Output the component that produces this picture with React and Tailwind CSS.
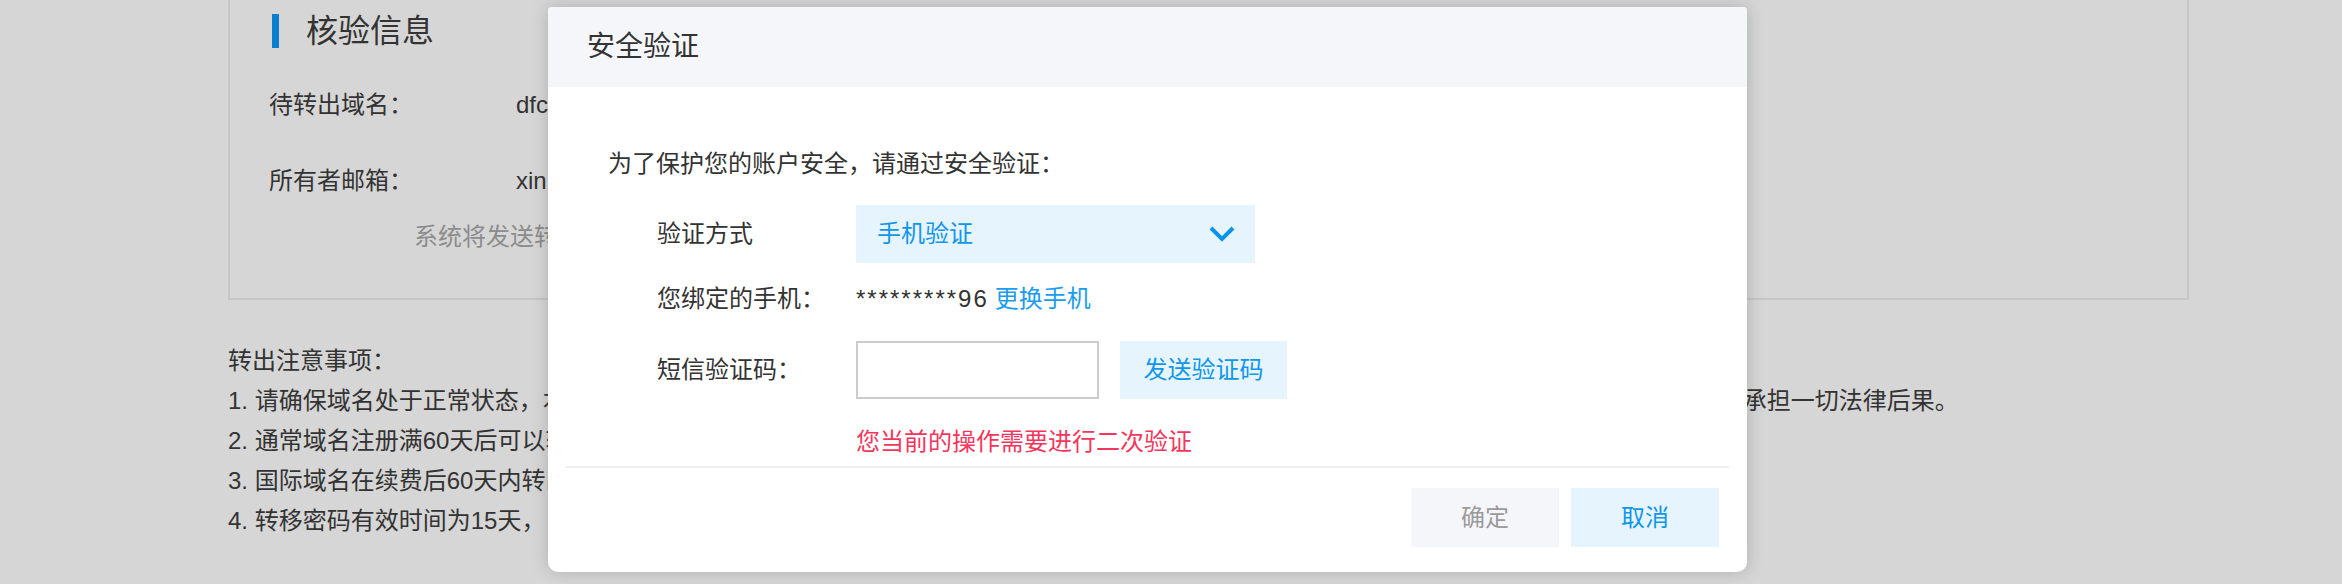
import React from 'react';

const FONT = "font-['Helvetica_Neue','Liberation_Sans','Noto_Sans_CJK_SC',sans-serif]";

const Chevron = () => (
  <svg width="26" height="16" viewBox="0 0 26 16" fill="none">
    <polyline points="2,2 13,13 24,2" stroke="#0b94e8" strokeWidth="4" strokeLinejoin="miter" />
  </svg>
);

const App = () => {
  return (
    <div className={`relative w-[2342px] h-[584px] overflow-hidden bg-[#d6d6d6] text-[#333] ${FONT}`}>
      {/* page under the mask */}
      <div className="pl-[228px] w-[2189px]">
        <section className="h-[300px] border-x-2 border-b-2 border-[#c6c6c6] pl-[42px] pt-[14px]">
          <div className="flex items-center h-[34px]">
            <span className="w-[7px] h-[34px] bg-[#0b7fcc]" />
            <h2 className="ml-[27px] text-[32px] leading-[34px] text-[#333]">核验信息</h2>
          </div>
          <div className="mt-[37px] flex h-[40px] items-center text-[24px]">
            <span className="w-[247px] -ml-[3px]">待转出域名：</span>
            <span>dfcloud.com</span>
          </div>
          <div className="mt-[36px] flex h-[40px] items-center text-[24px]">
            <span className="w-[247px] -ml-[3px]">所有者邮箱：</span>
            <span>xin@163.com</span>
          </div>
          <div className="mt-[16px] h-[40px] leading-[40px] pl-[142px] text-[24px] text-[#8c8c8c]">
            系统将发送转移密码
          </div>
        </section>

        <div className="mt-[41px] text-[24px] leading-[40px] text-[#333]">
          <p>转出注意事项：</p>
          <p>1. 请确保域名处于正常状态，本人确认该域名归本人所有，转出后域名的管理权及解析将转移至新注册商，如因域名转出产生任何纠纷，由本人承担一切法律后果。</p>
          <p>2. 通常域名注册满60天后可以转出。</p>
          <p>3. 国际域名在续费后60天内转出。</p>
          <p>4. 转移密码有效时间为15天，</p>
        </div>
      </div>

      {/* modal */}
      <div className="absolute left-[548px] top-[7px] w-[1199px] h-[565px] bg-white rounded-b-[10px] rounded-t-[4px] shadow-[0_0_18px_rgba(0,0,0,0.18)] flex flex-col">
        <div className="h-[80px] bg-[#f5f6fa] rounded-t-[4px] flex items-center pl-[39px] text-[28px] text-[#333]">
          安全验证
        </div>

        <div className="px-[60px] pt-[59px] text-[24px]">
          <p className="leading-[36px]">为了保护您的账户安全，请通过安全验证：</p>

          <div className="mt-[23px] flex items-center">
            <span className="w-[248px] pl-[49px]">验证方式</span>
            <div className="w-[399px] h-[58px] bg-[#e6f5fd] flex items-center justify-between pl-[21px] pr-[20px] text-[#1296ea]">
              <span>手机验证</span>
              <Chevron />
            </div>
          </div>

          <div className="mt-[18px] flex items-center h-[36px]">
            <span className="w-[248px] pl-[49px]">您绑定的手机：</span>
            <span className="tracking-[2px]">*********96</span>
            <span className="ml-[6px] text-[#1a9cf0]">更换手机</span>
          </div>

          <div className="mt-[24px] flex items-center">
            <span className="w-[248px] pl-[49px]">短信验证码：</span>
            <input className="w-[243px] h-[58px] border-2 border-[#cccccc] bg-white outline-none" />
            <button className="ml-[21px] w-[167px] h-[58px] bg-[#e6f5fd] text-[#1296ea]">发送验证码</button>
          </div>

          <p className="mt-[25px] leading-[36px] pl-[248px] text-[#f5365c]">您当前的操作需要进行二次验证</p>
        </div>

        <div className="mx-[18px] mt-[6px] h-[2px] bg-[#eeeeee]" />

        <div className="mt-[20px] flex justify-end gap-[12px] pr-[28px] text-[24px]">
          <button className="w-[148px] h-[59px] bg-[#f5f6fa] text-[#9a9a9a]">确定</button>
          <button className="w-[148px] h-[59px] bg-[#e6f5fd] text-[#1296ea]">取消</button>
        </div>
      </div>
    </div>
  );
};

export default App;
